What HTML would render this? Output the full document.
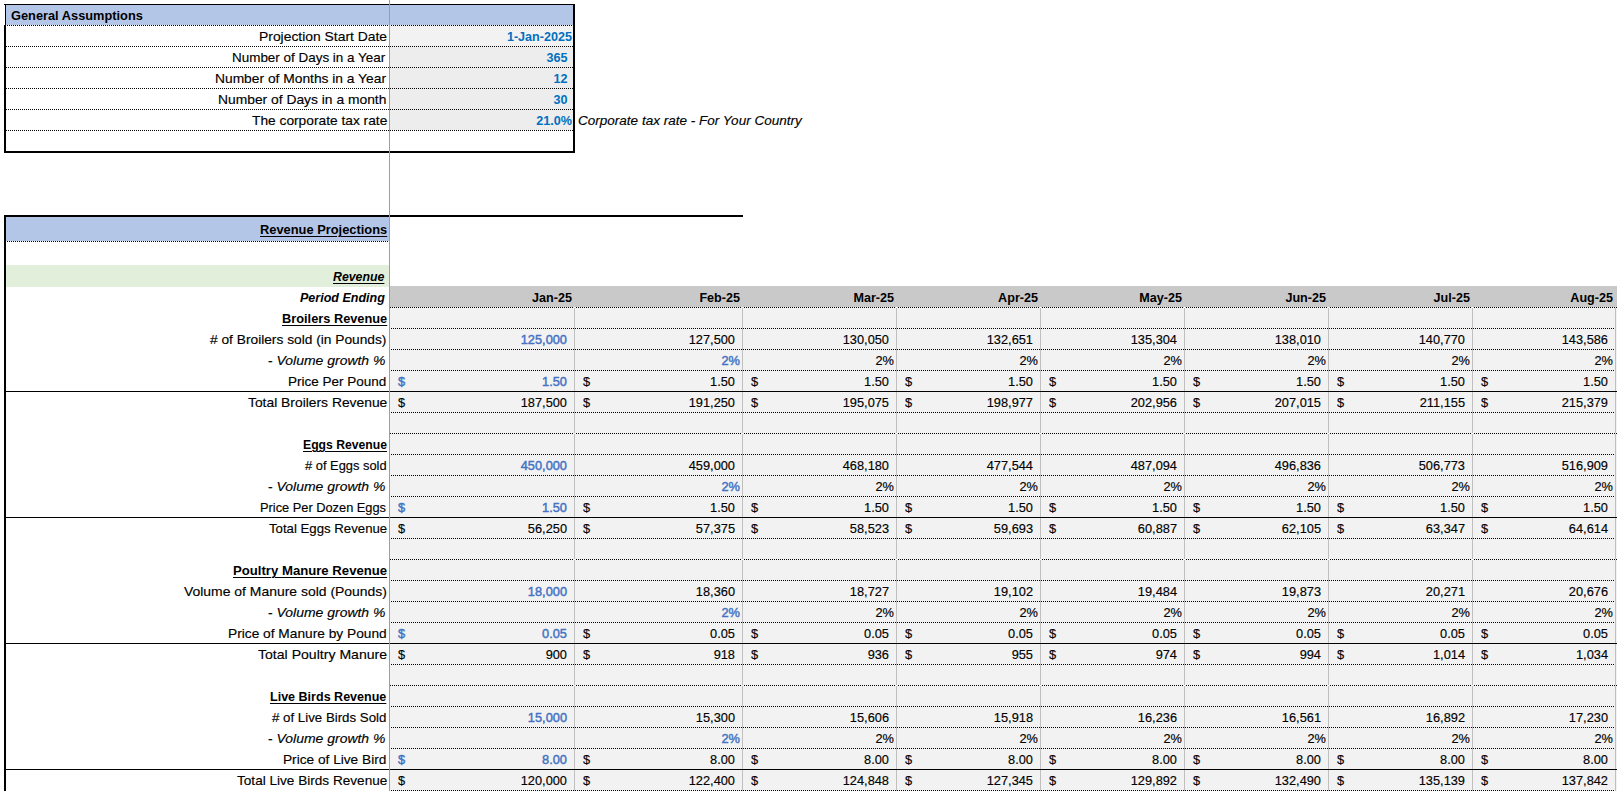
<!DOCTYPE html>
<html><head><meta charset="utf-8"><style>
html,body{margin:0;padding:0;background:#fff;width:1617px;height:791px;overflow:hidden;position:relative}
div{position:absolute}
.t{font-family:'Liberation Sans', sans-serif;line-height:21px;height:21px;white-space:pre;color:#000;-webkit-text-stroke:0.15px currentColor}
</style></head><body>
<div style="left:5px;top:5px;width:569px;height:20px;background:#b4c6e7"></div>
<div style="left:389px;top:25px;width:185px;height:21px;background:#f2f2f2"></div>
<div style="left:389px;top:46px;width:185px;height:84px;background:#ededed"></div>
<div style="left:5px;top:25px;width:568px;height:1px;background:repeating-linear-gradient(to right,#000 0 1px,transparent 1px 2px)"></div>
<div style="left:6px;top:46px;width:567px;height:1px;background:repeating-linear-gradient(to right,#000 0 1px,transparent 1px 2px)"></div>
<div style="left:6px;top:67px;width:567px;height:1px;background:repeating-linear-gradient(to right,#000 0 1px,transparent 1px 2px)"></div>
<div style="left:6px;top:88px;width:567px;height:1px;background:repeating-linear-gradient(to right,#000 0 1px,transparent 1px 2px)"></div>
<div style="left:6px;top:109px;width:567px;height:1px;background:repeating-linear-gradient(to right,#000 0 1px,transparent 1px 2px)"></div>
<div style="left:6px;top:130px;width:567px;height:1px;background:repeating-linear-gradient(to right,#000 0 1px,transparent 1px 2px)"></div>
<div style="left:4px;top:4px;width:571px;height:1px;background:#000"></div>
<div style="left:5px;top:5px;width:1px;height:20px;background:#000"></div>
<div style="left:4px;top:25px;width:2px;height:128px;background:#000"></div>
<div style="left:573px;top:4px;width:2px;height:149px;background:#000"></div>
<div style="left:4px;top:151px;width:571px;height:2px;background:#000"></div>
<div class="t" style="top:5px;font-size:13.0px;font-weight:bold;-webkit-text-stroke:0;left:11.40px;transform:scaleX(0.9848);transform-origin:0 0;">General Assumptions</div>
<div class="t" style="top:26px;font-size:13.3px;left:258.76px;transform:scaleX(1.0438);transform-origin:0 0;">Projection Start Date</div>
<div class="t" style="top:27px;font-size:12.6px;font-weight:bold;-webkit-text-stroke:0;color:#0070c0;right:1045px;">1-Jan-2025</div>
<div class="t" style="top:47px;font-size:13.3px;left:232.39px;transform:scaleX(1.0110);transform-origin:0 0;">Number of Days in a Year</div>
<div class="t" style="top:48px;font-size:12.6px;font-weight:bold;-webkit-text-stroke:0;color:#0070c0;right:1049.5px;">365</div>
<div class="t" style="top:68px;font-size:13.3px;left:214.56px;transform:scaleX(1.0374);transform-origin:0 0;">Number of Months in a Year</div>
<div class="t" style="top:69px;font-size:12.6px;font-weight:bold;-webkit-text-stroke:0;color:#0070c0;right:1049.5px;">12</div>
<div class="t" style="top:89px;font-size:13.3px;left:218.46px;transform:scaleX(1.0402);transform-origin:0 0;">Number of Days in a month</div>
<div class="t" style="top:90px;font-size:12.6px;font-weight:bold;-webkit-text-stroke:0;color:#0070c0;right:1049.5px;">30</div>
<div class="t" style="top:110px;font-size:13.3px;left:251.50px;transform:scaleX(1.0343);transform-origin:0 0;">The corporate tax rate</div>
<div class="t" style="top:111px;font-size:12.6px;font-weight:bold;-webkit-text-stroke:0;color:#0070c0;right:1045px;">21.0%</div>
<div class="t" style="top:110px;font-size:13.3px;font-style:italic;left:577.80px;transform:scaleX(1.0172);transform-origin:0 0;">Corporate tax rate - For Your Country</div>
<div style="left:4px;top:215px;width:739px;height:2px;background:#000"></div>
<div style="left:4px;top:215px;width:2px;height:576px;background:#000"></div>
<div style="left:6px;top:217px;width:383px;height:24px;background:#b4c6e7"></div>
<div style="left:7px;top:241px;width:382px;height:1px;background:repeating-linear-gradient(to right,#000 0 1px,transparent 1px 2px)"></div>
<div style="left:6px;top:265px;width:383px;height:22px;background:#e2efda"></div>
<div style="left:389px;top:286px;width:1228px;height:21px;background:#c9c9c9"></div>
<div style="left:389px;top:307px;width:1228px;height:484px;background:#f2f2f2"></div>
<div class="t" style="top:219px;font-size:13.0px;font-weight:bold;-webkit-text-stroke:0;text-decoration:underline;text-decoration-thickness:1px;text-underline-offset:2px;left:259.50px;transform:scaleX(0.9893);transform-origin:0 0;">Revenue Projections</div>
<div class="t" style="top:267px;font-size:12.6px;font-weight:bold;-webkit-text-stroke:0;font-style:italic;text-decoration:underline;text-decoration-thickness:1px;text-underline-offset:2px;left:333.40px;transform:scaleX(0.9792);transform-origin:0 0;">Revenue</div>
<div class="t" style="top:288px;font-size:12.6px;font-weight:bold;-webkit-text-stroke:0;font-style:italic;left:299.50px;transform:scaleX(0.9946);transform-origin:0 0;">Period Ending</div>
<div class="t" style="top:288px;font-size:12.6px;font-weight:bold;-webkit-text-stroke:0;right:1045px;">Jan-25</div>
<div class="t" style="top:288px;font-size:12.6px;font-weight:bold;-webkit-text-stroke:0;right:877px;">Feb-25</div>
<div class="t" style="top:288px;font-size:12.6px;font-weight:bold;-webkit-text-stroke:0;right:723px;">Mar-25</div>
<div class="t" style="top:288px;font-size:12.6px;font-weight:bold;-webkit-text-stroke:0;right:579px;">Apr-25</div>
<div class="t" style="top:288px;font-size:12.6px;font-weight:bold;-webkit-text-stroke:0;right:435px;">May-25</div>
<div class="t" style="top:288px;font-size:12.6px;font-weight:bold;-webkit-text-stroke:0;right:291px;">Jun-25</div>
<div class="t" style="top:288px;font-size:12.6px;font-weight:bold;-webkit-text-stroke:0;right:147px;">Jul-25</div>
<div class="t" style="top:288px;font-size:12.6px;font-weight:bold;-webkit-text-stroke:0;right:4px;">Aug-25</div>
<div style="left:390px;top:307px;width:1227px;height:1px;background:repeating-linear-gradient(to right,#000 0 1px,transparent 1px 2px)"></div>
<div style="left:391px;top:328px;width:1226px;height:1px;background:repeating-linear-gradient(to right,#000 0 1px,transparent 1px 2px)"></div>
<div style="left:391px;top:349px;width:1226px;height:1px;background:repeating-linear-gradient(to right,#000 0 1px,transparent 1px 2px)"></div>
<div style="left:391px;top:370px;width:1226px;height:1px;background:repeating-linear-gradient(to right,#000 0 1px,transparent 1px 2px)"></div>
<div style="left:391px;top:412px;width:1226px;height:1px;background:repeating-linear-gradient(to right,#000 0 1px,transparent 1px 2px)"></div>
<div style="left:390px;top:433px;width:1227px;height:1px;background:repeating-linear-gradient(to right,#000 0 1px,transparent 1px 2px)"></div>
<div style="left:391px;top:454px;width:1226px;height:1px;background:repeating-linear-gradient(to right,#000 0 1px,transparent 1px 2px)"></div>
<div style="left:391px;top:475px;width:1226px;height:1px;background:repeating-linear-gradient(to right,#000 0 1px,transparent 1px 2px)"></div>
<div style="left:391px;top:496px;width:1226px;height:1px;background:repeating-linear-gradient(to right,#000 0 1px,transparent 1px 2px)"></div>
<div style="left:391px;top:538px;width:1226px;height:1px;background:repeating-linear-gradient(to right,#000 0 1px,transparent 1px 2px)"></div>
<div style="left:390px;top:559px;width:1227px;height:1px;background:repeating-linear-gradient(to right,#000 0 1px,transparent 1px 2px)"></div>
<div style="left:391px;top:580px;width:1226px;height:1px;background:repeating-linear-gradient(to right,#000 0 1px,transparent 1px 2px)"></div>
<div style="left:391px;top:601px;width:1226px;height:1px;background:repeating-linear-gradient(to right,#000 0 1px,transparent 1px 2px)"></div>
<div style="left:391px;top:622px;width:1226px;height:1px;background:repeating-linear-gradient(to right,#000 0 1px,transparent 1px 2px)"></div>
<div style="left:391px;top:664px;width:1226px;height:1px;background:repeating-linear-gradient(to right,#000 0 1px,transparent 1px 2px)"></div>
<div style="left:390px;top:685px;width:1227px;height:1px;background:repeating-linear-gradient(to right,#000 0 1px,transparent 1px 2px)"></div>
<div style="left:391px;top:706px;width:1226px;height:1px;background:repeating-linear-gradient(to right,#000 0 1px,transparent 1px 2px)"></div>
<div style="left:391px;top:727px;width:1226px;height:1px;background:repeating-linear-gradient(to right,#000 0 1px,transparent 1px 2px)"></div>
<div style="left:391px;top:748px;width:1226px;height:1px;background:repeating-linear-gradient(to right,#000 0 1px,transparent 1px 2px)"></div>
<div style="left:391px;top:790px;width:1226px;height:1px;background:repeating-linear-gradient(to right,#000 0 1px,transparent 1px 2px)"></div>
<div style="left:574px;top:307px;width:1px;height:484px;background:#bfbfbf"></div>
<div style="left:742px;top:307px;width:1px;height:484px;background:#bfbfbf"></div>
<div style="left:896px;top:307px;width:1px;height:484px;background:#bfbfbf"></div>
<div style="left:1040px;top:307px;width:1px;height:484px;background:#bfbfbf"></div>
<div style="left:1184px;top:307px;width:1px;height:484px;background:#bfbfbf"></div>
<div style="left:1328px;top:307px;width:1px;height:484px;background:#bfbfbf"></div>
<div style="left:1472px;top:307px;width:1px;height:484px;background:#bfbfbf"></div>
<div style="left:1615px;top:307px;width:1px;height:484px;background:#bfbfbf"></div>
<div style="left:6px;top:391px;width:1611px;height:1px;background:#000"></div>
<div style="left:6px;top:517px;width:1611px;height:1px;background:#000"></div>
<div style="left:6px;top:643px;width:1611px;height:1px;background:#000"></div>
<div style="left:6px;top:769px;width:1611px;height:1px;background:#000"></div>
<div style="left:574px;top:307px;width:1px;height:1px;background:#f2f2f2"></div>
<div style="left:742px;top:307px;width:1px;height:1px;background:#f2f2f2"></div>
<div style="left:896px;top:307px;width:1px;height:1px;background:#f2f2f2"></div>
<div style="left:1040px;top:307px;width:1px;height:1px;background:#f2f2f2"></div>
<div style="left:1184px;top:307px;width:1px;height:1px;background:#f2f2f2"></div>
<div style="left:1328px;top:307px;width:1px;height:1px;background:#f2f2f2"></div>
<div style="left:1472px;top:307px;width:1px;height:1px;background:#f2f2f2"></div>
<div style="left:1615px;top:307px;width:1px;height:1px;background:#f2f2f2"></div>
<div style="left:574px;top:433px;width:1px;height:1px;background:#f2f2f2"></div>
<div style="left:742px;top:433px;width:1px;height:1px;background:#f2f2f2"></div>
<div style="left:896px;top:433px;width:1px;height:1px;background:#f2f2f2"></div>
<div style="left:1040px;top:433px;width:1px;height:1px;background:#f2f2f2"></div>
<div style="left:1184px;top:433px;width:1px;height:1px;background:#f2f2f2"></div>
<div style="left:1328px;top:433px;width:1px;height:1px;background:#f2f2f2"></div>
<div style="left:1472px;top:433px;width:1px;height:1px;background:#f2f2f2"></div>
<div style="left:1615px;top:433px;width:1px;height:1px;background:#f2f2f2"></div>
<div style="left:574px;top:559px;width:1px;height:1px;background:#f2f2f2"></div>
<div style="left:742px;top:559px;width:1px;height:1px;background:#f2f2f2"></div>
<div style="left:896px;top:559px;width:1px;height:1px;background:#f2f2f2"></div>
<div style="left:1040px;top:559px;width:1px;height:1px;background:#f2f2f2"></div>
<div style="left:1184px;top:559px;width:1px;height:1px;background:#f2f2f2"></div>
<div style="left:1328px;top:559px;width:1px;height:1px;background:#f2f2f2"></div>
<div style="left:1472px;top:559px;width:1px;height:1px;background:#f2f2f2"></div>
<div style="left:1615px;top:559px;width:1px;height:1px;background:#f2f2f2"></div>
<div style="left:574px;top:685px;width:1px;height:1px;background:#f2f2f2"></div>
<div style="left:742px;top:685px;width:1px;height:1px;background:#f2f2f2"></div>
<div style="left:896px;top:685px;width:1px;height:1px;background:#f2f2f2"></div>
<div style="left:1040px;top:685px;width:1px;height:1px;background:#f2f2f2"></div>
<div style="left:1184px;top:685px;width:1px;height:1px;background:#f2f2f2"></div>
<div style="left:1328px;top:685px;width:1px;height:1px;background:#f2f2f2"></div>
<div style="left:1472px;top:685px;width:1px;height:1px;background:#f2f2f2"></div>
<div style="left:1615px;top:685px;width:1px;height:1px;background:#f2f2f2"></div>
<div class="t" style="top:308px;font-size:13.0px;font-weight:bold;-webkit-text-stroke:0;text-decoration:underline;text-decoration-thickness:1px;text-underline-offset:2px;left:281.50px;transform:scaleX(0.9840);transform-origin:0 0;">Broilers Revenue</div>
<div class="t" style="top:329px;font-size:13.3px;left:210.40px;transform:scaleX(1.0335);transform-origin:0 0;"># of Broilers sold (in Pounds)</div>
<div class="t" style="top:350px;font-size:13.3px;left:267.80px;transform:scaleX(1.0499);transform-origin:0 0;">- <i>Volume growth %</i></div>
<div class="t" style="top:371px;font-size:13.3px;left:288.48px;transform:scaleX(1.0154);transform-origin:0 0;">Price Per Pound</div>
<div class="t" style="top:392px;font-size:13.3px;left:247.50px;transform:scaleX(1.0414);transform-origin:0 0;">Total Broilers Revenue</div>
<div class="t" style="top:329px;font-size:12.8px;color:#4472c4;-webkit-text-stroke:0.45px currentColor;right:1050px;">125,000</div>
<div class="t" style="top:371px;font-size:12.8px;color:#4472c4;-webkit-text-stroke:0.45px currentColor;left:398px;">$</div>
<div class="t" style="top:371px;font-size:12.8px;color:#4472c4;-webkit-text-stroke:0.45px currentColor;right:1050px;">1.50</div>
<div class="t" style="top:392px;font-size:12.8px;left:398px;">$</div>
<div class="t" style="top:392px;font-size:12.8px;right:1050px;">187,500</div>
<div class="t" style="top:329px;font-size:12.8px;right:882px;">127,500</div>
<div class="t" style="top:350px;font-size:12.8px;color:#4472c4;-webkit-text-stroke:0.45px currentColor;right:877px;">2%</div>
<div class="t" style="top:371px;font-size:12.8px;left:583px;">$</div>
<div class="t" style="top:371px;font-size:12.8px;right:882px;">1.50</div>
<div class="t" style="top:392px;font-size:12.8px;left:583px;">$</div>
<div class="t" style="top:392px;font-size:12.8px;right:882px;">191,250</div>
<div class="t" style="top:329px;font-size:12.8px;right:728px;">130,050</div>
<div class="t" style="top:350px;font-size:12.8px;right:723px;">2%</div>
<div class="t" style="top:371px;font-size:12.8px;left:751px;">$</div>
<div class="t" style="top:371px;font-size:12.8px;right:728px;">1.50</div>
<div class="t" style="top:392px;font-size:12.8px;left:751px;">$</div>
<div class="t" style="top:392px;font-size:12.8px;right:728px;">195,075</div>
<div class="t" style="top:329px;font-size:12.8px;right:584px;">132,651</div>
<div class="t" style="top:350px;font-size:12.8px;right:579px;">2%</div>
<div class="t" style="top:371px;font-size:12.8px;left:905px;">$</div>
<div class="t" style="top:371px;font-size:12.8px;right:584px;">1.50</div>
<div class="t" style="top:392px;font-size:12.8px;left:905px;">$</div>
<div class="t" style="top:392px;font-size:12.8px;right:584px;">198,977</div>
<div class="t" style="top:329px;font-size:12.8px;right:440px;">135,304</div>
<div class="t" style="top:350px;font-size:12.8px;right:435px;">2%</div>
<div class="t" style="top:371px;font-size:12.8px;left:1049px;">$</div>
<div class="t" style="top:371px;font-size:12.8px;right:440px;">1.50</div>
<div class="t" style="top:392px;font-size:12.8px;left:1049px;">$</div>
<div class="t" style="top:392px;font-size:12.8px;right:440px;">202,956</div>
<div class="t" style="top:329px;font-size:12.8px;right:296px;">138,010</div>
<div class="t" style="top:350px;font-size:12.8px;right:291px;">2%</div>
<div class="t" style="top:371px;font-size:12.8px;left:1193px;">$</div>
<div class="t" style="top:371px;font-size:12.8px;right:296px;">1.50</div>
<div class="t" style="top:392px;font-size:12.8px;left:1193px;">$</div>
<div class="t" style="top:392px;font-size:12.8px;right:296px;">207,015</div>
<div class="t" style="top:329px;font-size:12.8px;right:152px;">140,770</div>
<div class="t" style="top:350px;font-size:12.8px;right:147px;">2%</div>
<div class="t" style="top:371px;font-size:12.8px;left:1337px;">$</div>
<div class="t" style="top:371px;font-size:12.8px;right:152px;">1.50</div>
<div class="t" style="top:392px;font-size:12.8px;left:1337px;">$</div>
<div class="t" style="top:392px;font-size:12.8px;right:152px;">211,155</div>
<div class="t" style="top:329px;font-size:12.8px;right:9px;">143,586</div>
<div class="t" style="top:350px;font-size:12.8px;right:4px;">2%</div>
<div class="t" style="top:371px;font-size:12.8px;left:1481px;">$</div>
<div class="t" style="top:371px;font-size:12.8px;right:9px;">1.50</div>
<div class="t" style="top:392px;font-size:12.8px;left:1481px;">$</div>
<div class="t" style="top:392px;font-size:12.8px;right:9px;">215,379</div>
<div class="t" style="top:434px;font-size:13.0px;font-weight:bold;-webkit-text-stroke:0;text-decoration:underline;text-decoration-thickness:1px;text-underline-offset:2px;left:302.70px;transform:scaleX(0.9378);transform-origin:0 0;">Eggs Revenue</div>
<div class="t" style="top:455px;font-size:13.3px;left:305.20px;transform:scaleX(0.9681);transform-origin:0 0;"># of Eggs sold</div>
<div class="t" style="top:476px;font-size:13.3px;left:267.80px;transform:scaleX(1.0499);transform-origin:0 0;">- <i>Volume growth %</i></div>
<div class="t" style="top:497px;font-size:13.3px;left:260.04px;transform:scaleX(0.9634);transform-origin:0 0;">Price Per Dozen Eggs</div>
<div class="t" style="top:518px;font-size:13.3px;left:268.60px;transform:scaleX(0.9931);transform-origin:0 0;">Total Eggs Revenue</div>
<div class="t" style="top:455px;font-size:12.8px;color:#4472c4;-webkit-text-stroke:0.45px currentColor;right:1050px;">450,000</div>
<div class="t" style="top:497px;font-size:12.8px;color:#4472c4;-webkit-text-stroke:0.45px currentColor;left:398px;">$</div>
<div class="t" style="top:497px;font-size:12.8px;color:#4472c4;-webkit-text-stroke:0.45px currentColor;right:1050px;">1.50</div>
<div class="t" style="top:518px;font-size:12.8px;left:398px;">$</div>
<div class="t" style="top:518px;font-size:12.8px;right:1050px;">56,250</div>
<div class="t" style="top:455px;font-size:12.8px;right:882px;">459,000</div>
<div class="t" style="top:476px;font-size:12.8px;color:#4472c4;-webkit-text-stroke:0.45px currentColor;right:877px;">2%</div>
<div class="t" style="top:497px;font-size:12.8px;left:583px;">$</div>
<div class="t" style="top:497px;font-size:12.8px;right:882px;">1.50</div>
<div class="t" style="top:518px;font-size:12.8px;left:583px;">$</div>
<div class="t" style="top:518px;font-size:12.8px;right:882px;">57,375</div>
<div class="t" style="top:455px;font-size:12.8px;right:728px;">468,180</div>
<div class="t" style="top:476px;font-size:12.8px;right:723px;">2%</div>
<div class="t" style="top:497px;font-size:12.8px;left:751px;">$</div>
<div class="t" style="top:497px;font-size:12.8px;right:728px;">1.50</div>
<div class="t" style="top:518px;font-size:12.8px;left:751px;">$</div>
<div class="t" style="top:518px;font-size:12.8px;right:728px;">58,523</div>
<div class="t" style="top:455px;font-size:12.8px;right:584px;">477,544</div>
<div class="t" style="top:476px;font-size:12.8px;right:579px;">2%</div>
<div class="t" style="top:497px;font-size:12.8px;left:905px;">$</div>
<div class="t" style="top:497px;font-size:12.8px;right:584px;">1.50</div>
<div class="t" style="top:518px;font-size:12.8px;left:905px;">$</div>
<div class="t" style="top:518px;font-size:12.8px;right:584px;">59,693</div>
<div class="t" style="top:455px;font-size:12.8px;right:440px;">487,094</div>
<div class="t" style="top:476px;font-size:12.8px;right:435px;">2%</div>
<div class="t" style="top:497px;font-size:12.8px;left:1049px;">$</div>
<div class="t" style="top:497px;font-size:12.8px;right:440px;">1.50</div>
<div class="t" style="top:518px;font-size:12.8px;left:1049px;">$</div>
<div class="t" style="top:518px;font-size:12.8px;right:440px;">60,887</div>
<div class="t" style="top:455px;font-size:12.8px;right:296px;">496,836</div>
<div class="t" style="top:476px;font-size:12.8px;right:291px;">2%</div>
<div class="t" style="top:497px;font-size:12.8px;left:1193px;">$</div>
<div class="t" style="top:497px;font-size:12.8px;right:296px;">1.50</div>
<div class="t" style="top:518px;font-size:12.8px;left:1193px;">$</div>
<div class="t" style="top:518px;font-size:12.8px;right:296px;">62,105</div>
<div class="t" style="top:455px;font-size:12.8px;right:152px;">506,773</div>
<div class="t" style="top:476px;font-size:12.8px;right:147px;">2%</div>
<div class="t" style="top:497px;font-size:12.8px;left:1337px;">$</div>
<div class="t" style="top:497px;font-size:12.8px;right:152px;">1.50</div>
<div class="t" style="top:518px;font-size:12.8px;left:1337px;">$</div>
<div class="t" style="top:518px;font-size:12.8px;right:152px;">63,347</div>
<div class="t" style="top:455px;font-size:12.8px;right:9px;">516,909</div>
<div class="t" style="top:476px;font-size:12.8px;right:4px;">2%</div>
<div class="t" style="top:497px;font-size:12.8px;left:1481px;">$</div>
<div class="t" style="top:497px;font-size:12.8px;right:9px;">1.50</div>
<div class="t" style="top:518px;font-size:12.8px;left:1481px;">$</div>
<div class="t" style="top:518px;font-size:12.8px;right:9px;">64,614</div>
<div class="t" style="top:560px;font-size:13.0px;font-weight:bold;-webkit-text-stroke:0;text-decoration:underline;text-decoration-thickness:1px;text-underline-offset:2px;left:232.60px;transform:scaleX(1.0112);transform-origin:0 0;">Poultry Manure Revenue</div>
<div class="t" style="top:581px;font-size:13.3px;left:183.90px;transform:scaleX(1.0480);transform-origin:0 0;">Volume of Manure sold (Pounds)</div>
<div class="t" style="top:602px;font-size:13.3px;left:267.80px;transform:scaleX(1.0499);transform-origin:0 0;">- <i>Volume growth %</i></div>
<div class="t" style="top:623px;font-size:13.3px;left:228.07px;transform:scaleX(1.0325);transform-origin:0 0;">Price of Manure by Pound</div>
<div class="t" style="top:644px;font-size:13.3px;left:257.70px;transform:scaleX(1.0588);transform-origin:0 0;">Total Poultry Manure</div>
<div class="t" style="top:581px;font-size:12.8px;color:#4472c4;-webkit-text-stroke:0.45px currentColor;right:1050px;">18,000</div>
<div class="t" style="top:623px;font-size:12.8px;color:#4472c4;-webkit-text-stroke:0.45px currentColor;left:398px;">$</div>
<div class="t" style="top:623px;font-size:12.8px;color:#4472c4;-webkit-text-stroke:0.45px currentColor;right:1050px;">0.05</div>
<div class="t" style="top:644px;font-size:12.8px;left:398px;">$</div>
<div class="t" style="top:644px;font-size:12.8px;right:1050px;">900</div>
<div class="t" style="top:581px;font-size:12.8px;right:882px;">18,360</div>
<div class="t" style="top:602px;font-size:12.8px;color:#4472c4;-webkit-text-stroke:0.45px currentColor;right:877px;">2%</div>
<div class="t" style="top:623px;font-size:12.8px;left:583px;">$</div>
<div class="t" style="top:623px;font-size:12.8px;right:882px;">0.05</div>
<div class="t" style="top:644px;font-size:12.8px;left:583px;">$</div>
<div class="t" style="top:644px;font-size:12.8px;right:882px;">918</div>
<div class="t" style="top:581px;font-size:12.8px;right:728px;">18,727</div>
<div class="t" style="top:602px;font-size:12.8px;right:723px;">2%</div>
<div class="t" style="top:623px;font-size:12.8px;left:751px;">$</div>
<div class="t" style="top:623px;font-size:12.8px;right:728px;">0.05</div>
<div class="t" style="top:644px;font-size:12.8px;left:751px;">$</div>
<div class="t" style="top:644px;font-size:12.8px;right:728px;">936</div>
<div class="t" style="top:581px;font-size:12.8px;right:584px;">19,102</div>
<div class="t" style="top:602px;font-size:12.8px;right:579px;">2%</div>
<div class="t" style="top:623px;font-size:12.8px;left:905px;">$</div>
<div class="t" style="top:623px;font-size:12.8px;right:584px;">0.05</div>
<div class="t" style="top:644px;font-size:12.8px;left:905px;">$</div>
<div class="t" style="top:644px;font-size:12.8px;right:584px;">955</div>
<div class="t" style="top:581px;font-size:12.8px;right:440px;">19,484</div>
<div class="t" style="top:602px;font-size:12.8px;right:435px;">2%</div>
<div class="t" style="top:623px;font-size:12.8px;left:1049px;">$</div>
<div class="t" style="top:623px;font-size:12.8px;right:440px;">0.05</div>
<div class="t" style="top:644px;font-size:12.8px;left:1049px;">$</div>
<div class="t" style="top:644px;font-size:12.8px;right:440px;">974</div>
<div class="t" style="top:581px;font-size:12.8px;right:296px;">19,873</div>
<div class="t" style="top:602px;font-size:12.8px;right:291px;">2%</div>
<div class="t" style="top:623px;font-size:12.8px;left:1193px;">$</div>
<div class="t" style="top:623px;font-size:12.8px;right:296px;">0.05</div>
<div class="t" style="top:644px;font-size:12.8px;left:1193px;">$</div>
<div class="t" style="top:644px;font-size:12.8px;right:296px;">994</div>
<div class="t" style="top:581px;font-size:12.8px;right:152px;">20,271</div>
<div class="t" style="top:602px;font-size:12.8px;right:147px;">2%</div>
<div class="t" style="top:623px;font-size:12.8px;left:1337px;">$</div>
<div class="t" style="top:623px;font-size:12.8px;right:152px;">0.05</div>
<div class="t" style="top:644px;font-size:12.8px;left:1337px;">$</div>
<div class="t" style="top:644px;font-size:12.8px;right:152px;">1,014</div>
<div class="t" style="top:581px;font-size:12.8px;right:9px;">20,676</div>
<div class="t" style="top:602px;font-size:12.8px;right:4px;">2%</div>
<div class="t" style="top:623px;font-size:12.8px;left:1481px;">$</div>
<div class="t" style="top:623px;font-size:12.8px;right:9px;">0.05</div>
<div class="t" style="top:644px;font-size:12.8px;left:1481px;">$</div>
<div class="t" style="top:644px;font-size:12.8px;right:9px;">1,034</div>
<div class="t" style="top:686px;font-size:13.0px;font-weight:bold;-webkit-text-stroke:0;text-decoration:underline;text-decoration-thickness:1px;text-underline-offset:2px;left:270.40px;transform:scaleX(0.9641);transform-origin:0 0;">Live Birds Revenue</div>
<div class="t" style="top:707px;font-size:13.3px;left:272.40px;transform:scaleX(0.9985);transform-origin:0 0;"># of Live Birds Sold</div>
<div class="t" style="top:728px;font-size:13.3px;left:267.80px;transform:scaleX(1.0499);transform-origin:0 0;">- <i>Volume growth %</i></div>
<div class="t" style="top:749px;font-size:13.3px;left:283.47px;transform:scaleX(1.0281);transform-origin:0 0;">Price of Live Bird</div>
<div class="t" style="top:770px;font-size:13.3px;left:236.50px;transform:scaleX(1.0219);transform-origin:0 0;">Total Live Birds Revenue</div>
<div class="t" style="top:707px;font-size:12.8px;color:#4472c4;-webkit-text-stroke:0.45px currentColor;right:1050px;">15,000</div>
<div class="t" style="top:749px;font-size:12.8px;color:#4472c4;-webkit-text-stroke:0.45px currentColor;left:398px;">$</div>
<div class="t" style="top:749px;font-size:12.8px;color:#4472c4;-webkit-text-stroke:0.45px currentColor;right:1050px;">8.00</div>
<div class="t" style="top:770px;font-size:12.8px;left:398px;">$</div>
<div class="t" style="top:770px;font-size:12.8px;right:1050px;">120,000</div>
<div class="t" style="top:707px;font-size:12.8px;right:882px;">15,300</div>
<div class="t" style="top:728px;font-size:12.8px;color:#4472c4;-webkit-text-stroke:0.45px currentColor;right:877px;">2%</div>
<div class="t" style="top:749px;font-size:12.8px;left:583px;">$</div>
<div class="t" style="top:749px;font-size:12.8px;right:882px;">8.00</div>
<div class="t" style="top:770px;font-size:12.8px;left:583px;">$</div>
<div class="t" style="top:770px;font-size:12.8px;right:882px;">122,400</div>
<div class="t" style="top:707px;font-size:12.8px;right:728px;">15,606</div>
<div class="t" style="top:728px;font-size:12.8px;right:723px;">2%</div>
<div class="t" style="top:749px;font-size:12.8px;left:751px;">$</div>
<div class="t" style="top:749px;font-size:12.8px;right:728px;">8.00</div>
<div class="t" style="top:770px;font-size:12.8px;left:751px;">$</div>
<div class="t" style="top:770px;font-size:12.8px;right:728px;">124,848</div>
<div class="t" style="top:707px;font-size:12.8px;right:584px;">15,918</div>
<div class="t" style="top:728px;font-size:12.8px;right:579px;">2%</div>
<div class="t" style="top:749px;font-size:12.8px;left:905px;">$</div>
<div class="t" style="top:749px;font-size:12.8px;right:584px;">8.00</div>
<div class="t" style="top:770px;font-size:12.8px;left:905px;">$</div>
<div class="t" style="top:770px;font-size:12.8px;right:584px;">127,345</div>
<div class="t" style="top:707px;font-size:12.8px;right:440px;">16,236</div>
<div class="t" style="top:728px;font-size:12.8px;right:435px;">2%</div>
<div class="t" style="top:749px;font-size:12.8px;left:1049px;">$</div>
<div class="t" style="top:749px;font-size:12.8px;right:440px;">8.00</div>
<div class="t" style="top:770px;font-size:12.8px;left:1049px;">$</div>
<div class="t" style="top:770px;font-size:12.8px;right:440px;">129,892</div>
<div class="t" style="top:707px;font-size:12.8px;right:296px;">16,561</div>
<div class="t" style="top:728px;font-size:12.8px;right:291px;">2%</div>
<div class="t" style="top:749px;font-size:12.8px;left:1193px;">$</div>
<div class="t" style="top:749px;font-size:12.8px;right:296px;">8.00</div>
<div class="t" style="top:770px;font-size:12.8px;left:1193px;">$</div>
<div class="t" style="top:770px;font-size:12.8px;right:296px;">132,490</div>
<div class="t" style="top:707px;font-size:12.8px;right:152px;">16,892</div>
<div class="t" style="top:728px;font-size:12.8px;right:147px;">2%</div>
<div class="t" style="top:749px;font-size:12.8px;left:1337px;">$</div>
<div class="t" style="top:749px;font-size:12.8px;right:152px;">8.00</div>
<div class="t" style="top:770px;font-size:12.8px;left:1337px;">$</div>
<div class="t" style="top:770px;font-size:12.8px;right:152px;">135,139</div>
<div class="t" style="top:707px;font-size:12.8px;right:9px;">17,230</div>
<div class="t" style="top:728px;font-size:12.8px;right:4px;">2%</div>
<div class="t" style="top:749px;font-size:12.8px;left:1481px;">$</div>
<div class="t" style="top:749px;font-size:12.8px;right:9px;">8.00</div>
<div class="t" style="top:770px;font-size:12.8px;left:1481px;">$</div>
<div class="t" style="top:770px;font-size:12.8px;right:9px;">137,842</div>
<div style="left:389px;top:0px;width:1px;height:791px;background:#9e9e9e"></div>
</body></html>
